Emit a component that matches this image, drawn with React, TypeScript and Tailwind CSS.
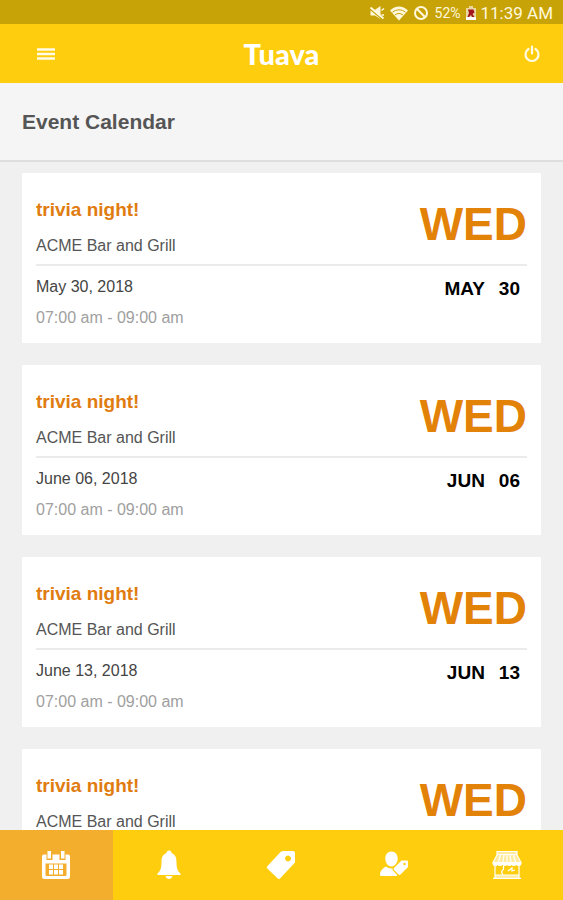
import React from "react";
import cn from "clsx";

interface IEvent {
  id: number;
  title: string;
  venue: string;
  date: string;
  time: string;
  weekday: string;
  month: string;
  day: string;
}

const events: IEvent[] = [
  { id: 1, title: "trivia night!", venue: "ACME Bar and Grill", date: "May 30, 2018", time: "07:00 am - 09:00 am", weekday: "WED", month: "MAY", day: "30" },
  { id: 2, title: "trivia night!", venue: "ACME Bar and Grill", date: "June 06, 2018", time: "07:00 am - 09:00 am", weekday: "WED", month: "JUN", day: "06" },
  { id: 3, title: "trivia night!", venue: "ACME Bar and Grill", date: "June 13, 2018", time: "07:00 am - 09:00 am", weekday: "WED", month: "JUN", day: "13" },
  { id: 4, title: "trivia night!", venue: "ACME Bar and Grill", date: "June 20, 2018", time: "07:00 am - 09:00 am", weekday: "WED", month: "JUN", day: "20" },
];

// Icons
function MutedIcon() {
  return (
    <svg aria-hidden="true" className="h-4 w-4" viewBox="0 0 16 16" fill="currentColor">
      <path d="M1.500 5.500H5L11.500 1v13L6 10.500H1.500z" />
      <path d="M12.500 5.500l2.500-2M12.500 10h2.500" stroke="currentColor" strokeWidth="1.500" />
      <path d="M1.500 4.500l12 10" stroke="#c8a307" strokeWidth="1.500" />
      <path d="M1.500 2.500l13 11" stroke="currentColor" strokeWidth="2" />
    </svg>
  );
}

function WifiIcon() {
  return (
    <svg aria-hidden="true" className="h-4 w-5" viewBox="0 0 20 16">
      <path d="M1 5.500C6.500.300 13.500.300 19 5.500L10 15.500z" fill="currentColor" />
      <path d="M3.500 7.300c4-3.300 9-3.300 13 0M6 10c2.500-2 5.500-2 8 0" fill="none" stroke="#c8a307" strokeWidth="1" />
    </svg>
  );
}

function BlockedIcon() {
  return (
    <svg aria-hidden="true" className="h-4 w-4" viewBox="0 0 16 16" fill="none" stroke="currentColor" strokeWidth="2">
      <circle cx="8" cy="8" r="6" />
      <path d="M3.800 3.800l8.400 8.400" />
    </svg>
  );
}

function BatteryIcon() {
  return (
    <svg aria-hidden="true" className="h-4 w-3" viewBox="0 0 12 16">
      <path d="M1 3h3V1h4v2h3v12H1z" fill="#e9d9a0" />
      <path d="M1 12h10v3H1z" fill="#fff" />
      <path d="M3 4.500h5.500l1 3-2 1.500 2 3H7l-1-2-2 2H2.500l1.500-4z" fill="#a3141c" />
    </svg>
  );
}

function MenuIcon() {
  return (
    <svg aria-hidden="true" className="h-5 w-5" viewBox="0 0 20 20" stroke="currentColor" strokeWidth="2.500">
      <path d="M1 5.500h18M1 10h18M1 14.500h18" />
    </svg>
  );
}

function PowerIcon() {
  return (
    <svg aria-hidden="true" className="h-5 w-5" viewBox="0 0 20 20" fill="none" stroke="currentColor" strokeWidth="2.200" strokeLinecap="round">
      <path d="M6.500 5a6.500 6.500 0 1 0 7 0M10 2.500v7" />
    </svg>
  );
}

function CalendarIcon() {
  return (
    <svg aria-hidden="true" className="h-8 w-8" viewBox="0 0 32 32" fill="currentColor">
      <path fillRule="evenodd" d="M4 5.500h24a2 2 0 0 1 2 2v20a2.500 2.500 0 0 1-2.500 2.500h-23A2.500 2.500 0 0 1 2 27.500v-20a2 2 0 0 1 2-2zM5.500 14.500v11.500a1 1 0 0 0 1 1h19a1 1 0 0 0 1-1V14.500z" />
      <path d="M6.500 1h6v10h-6zM19.500 1h6v10h-6z" fill="#f4ae2e" />
      <path d="M7.500 2H11v7.500H7.500zM21 2h3.500v7.500H21z" />
      <path d="M9 15.500h4v4.500H9zM14 15.500h4v4.500h-4zM19 15.500h4v4.500h-4zM9 21h4v4.500H9zM14 21h4v4.500h-4zM19 21h4v4.500h-4z" />
    </svg>
  );
}

function BellIcon() {
  return (
    <svg aria-hidden="true" className="h-8 w-8" viewBox="0 0 32 32" fill="currentColor">
      <path d="M16 1.500a2.500 2.500 0 0 1 2.500 2.500c4 1.500 5 5 5 9 0 6 1 9 4 11.500V26h-23v-1.500c3-2.500 4-5.500 4-11.500 0-4 1-7.500 5-9A2.500 2.500 0 0 1 16 1.500z" />
      <path d="M12.500 27h7c-.5 2-1.800 3-3.500 3s-3-1-3.500-3z" />
    </svg>
  );
}

function TagIcon() {
  return (
    <svg aria-hidden="true" className="h-8 w-8" viewBox="0 0 32 32" fill="currentColor">
      <path fillRule="evenodd" d="M17.500 2H28a2 2 0 0 1 2 2v9.500L15 29.500a1.500 1.500 0 0 1-2.200 0L2.300 19.500a1.500 1.500 0 0 1 0-2.200L15.500 3zM23 6.500a3 3 0 1 0 .01 0z" />
    </svg>
  );
}

function PersonTagIcon() {
  return (
    <svg aria-hidden="true" className="h-8 w-8" viewBox="0 0 32 32" fill="currentColor">
      <path d="M13.500 2.500c3.800 0 6.200 3 6.200 7s-2.400 8-6.200 8-6.200-4-6.200-8 2.400-7 6.200-7z" />
      <path d="M8 17.500c3 2.500 8 2.500 11 0V27H3a1 1 0 0 1-1-1c0-4 2.500-6.500 6-8.500z" />
      {/* gap between the person and the tag */}
      <path d="M23.500 11.500h5.500a1 1 0 0 1 1 1V18l-7.500 7.500a1.500 1.500 0 0 1-2 0L16 21a1.500 1.500 0 0 1 0-2z" fill="#fecd0d" stroke="#fecd0d" strokeWidth="2.500" />
      <path d="M23.500 11.500h5.500a1 1 0 0 1 1 1V18l-7.500 7.500a1.500 1.500 0 0 1-2 0L16 21a1.500 1.500 0 0 1 0-2z" />
      <circle cx="26.500" cy="15" r="1.200" fill="#fecd0d" />
    </svg>
  );
}

function StoreIcon() {
  return (
    <svg aria-hidden="true" className="h-8 w-8" viewBox="0 0 32 32" fill="none" stroke="currentColor" strokeWidth="1.200">
      <path d="M6 2.500h20v3H6zM6 6l-4 7.500M26 6l4 7.500M9.500 6L7.500 13M13 6l-1 7M16 6v7M19 6l1 7M22.500 6l2 7" />
      <path d="M6 2.500h20V6l3.500 7.500h-27L6 6z" fill="currentColor" fillOpacity="0.600" stroke="none" />
      <path d="M2 13.500c0 4 4.700 4 4.700 0 0 4 4.600 4 4.600 0 0 4 4.700 4 4.700 0 0 4 4.700 4 4.700 0 0 4 4.600 4 4.600 0 0 4 4.700 4 4.700 0z" fill="currentColor" />
      <path d="M4 16v13M28 16v13M2 29.300h28M4 26h24M12.500 17v3l-2 3 1.500 3" />
      <path d="M4 26h24v3H4z" fill="currentColor" fillOpacity="0.600" stroke="none" />
      <path d="M17 22l4-3v3l3-1" />
    </svg>
  );
}

function StatusBar() {
  return (
    <div className="flex h-6 shrink-0 items-center justify-end bg-[#c8a307] pt-[2px] pr-[10px] font-[Roboto,sans-serif] text-[#fff8dc]">
      <MutedIcon />
      <span className="ml-1 flex">
        <WifiIcon />
      </span>
      <span className="ml-1 flex">
        <BlockedIcon />
      </span>
      <span className="ml-[6px] text-sm">52%</span>
      <span className="ml-1 flex">
        <BatteryIcon />
      </span>
      <span className="ml-1 text-[17px] leading-5">11:39 AM</span>
    </div>
  );
}

function Header() {
  return (
    <header className="grid h-[59px] shrink-0 grid-cols-[1fr_auto_1fr] items-center bg-[#fecd0d] px-[21px] text-[#fffbe6]">
      <button type="button" aria-label="Menu" className="ml-[15px] justify-self-start">
        <MenuIcon />
      </button>
      <span className="font-[Lato,sans-serif] text-[29px] leading-8 font-black text-white">Tuava</span>
      <button type="button" aria-label="Log out" className="justify-self-end">
        <PowerIcon />
      </button>
    </header>
  );
}

interface IEventCardProps {
  event: IEvent;
}

function EventCard({ event }: IEventCardProps) {
  return (
    <article className="shrink-0 bg-white px-[14px] pt-6 pb-[13px]">
      <div className="flex justify-between border-b-2 border-[#ebebeb] pb-[6px]">
        <div>
          <h2 className="text-[19px] leading-[26px] font-bold text-[#e07c10]">{event.title}</h2>
          <p className="mt-[11px] text-base leading-6 text-[#555]">{event.venue}</p>
        </div>
        <p className="text-[46px] leading-[54px] font-bold text-[#e38208]">{event.weekday}</p>
      </div>
      <div className="flex justify-between pt-[9px]">
        <div>
          <p className="text-base leading-6 text-[#444]">{event.date}</p>
          <p className="mt-[7px] text-base leading-6 text-[#a0a0a0]">{event.time}</p>
        </div>
        <p className="flex gap-[14px] pr-[7px] text-[19px] leading-7 font-bold text-black">
          <span>{event.month}</span>
          <span>{event.day}</span>
        </p>
      </div>
    </article>
  );
}

const tabs = [
  { label: "Calendar", icon: <CalendarIcon /> },
  { label: "Notifications", icon: <BellIcon /> },
  { label: "Offers", icon: <TagIcon /> },
  { label: "My offers", icon: <PersonTagIcon /> },
  { label: "Stores", icon: <StoreIcon /> },
];

function TabBar() {
  return (
    <nav className="grid h-[70px] shrink-0 grid-cols-5">
      {tabs.map((tab, i) => (
        <button
          key={tab.label}
          type="button"
          aria-label={tab.label}
          className={cn("flex items-center justify-center text-white", i === 0 ? "bg-[#f4ae2e]" : "bg-[#fecd0d]")}
        >
          {tab.icon}
        </button>
      ))}
    </nav>
  );
}

export default function App() {
  return (
    <div className="flex h-screen flex-col bg-[#f0f0f0] font-['Liberation_Sans',Arial,sans-serif]">
      <StatusBar />
      <Header />
      <div className="shrink-0 border-b-2 border-[#dedede] bg-[#f5f5f5] px-[22px] pt-6 pb-[23px]">
        <h1 className="text-[21px] leading-[30px] font-bold text-[#555]">Event Calendar</h1>
      </div>
      <main className="flex min-h-0 flex-1 flex-col gap-[22px] overflow-y-auto px-[22px] pt-[11px] [scrollbar-width:none]">
        {events.map((event) => (
          <EventCard key={event.id} event={event} />
        ))}
      </main>
      <TabBar />
    </div>
  );
}
